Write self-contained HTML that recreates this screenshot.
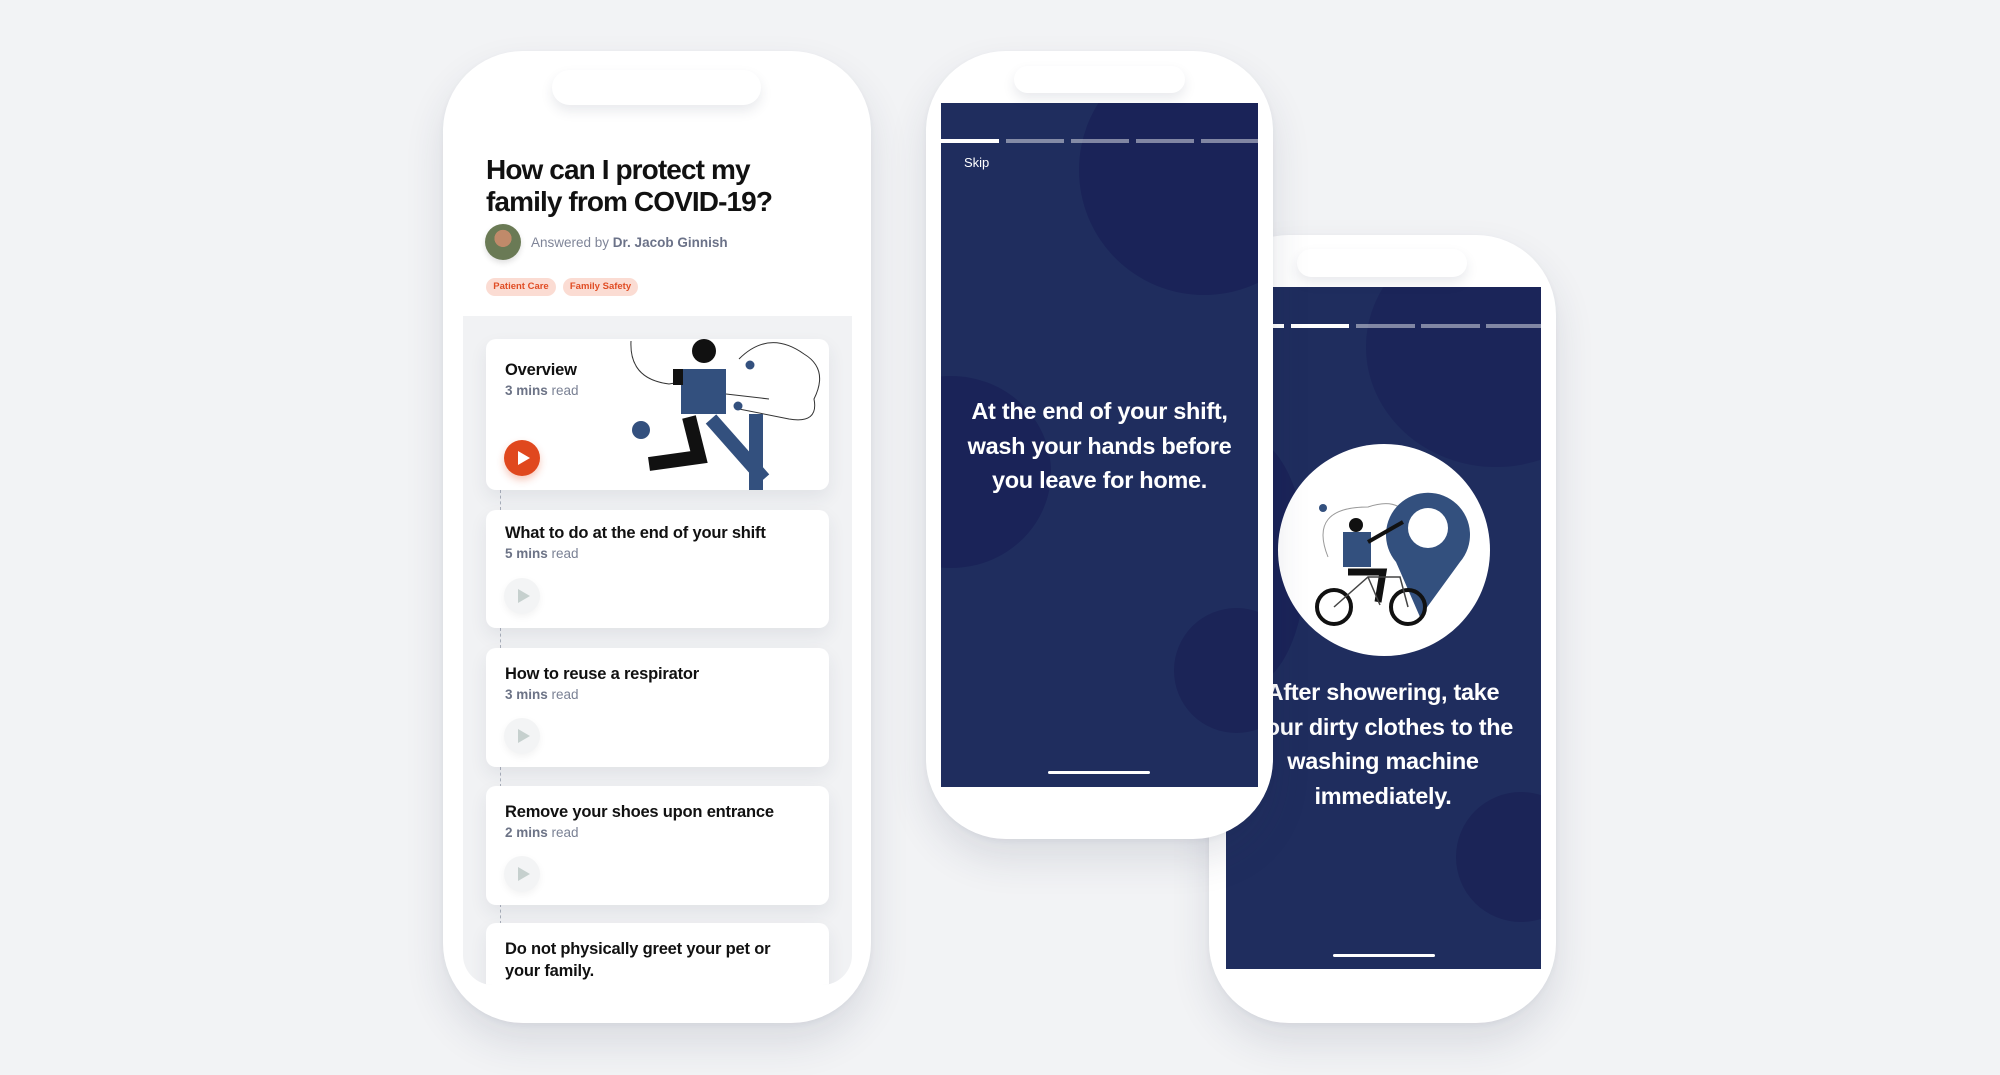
<!DOCTYPE html>
<html><head><meta charset="utf-8"><style>
*{margin:0;padding:0;box-sizing:border-box}
body{width:2000px;height:1075px;background:#f2f3f5;position:relative;overflow:hidden;font-family:"Liberation Sans",sans-serif}
.abs{position:absolute}
.phone{position:absolute;background:#fff;box-shadow:0 20px 40px rgba(40,50,80,.12),0 2px 6px rgba(40,50,80,.05)}
.notch{position:absolute;background:#fff;border-radius:0 0 26px 26px;box-shadow:0 6px 12px rgba(40,50,80,.10)}
.card{position:absolute;left:23px;width:343px;background:#fff;border-radius:10px;box-shadow:0 8px 18px rgba(40,50,80,.08)}
.ct{position:absolute;left:19px;font-weight:bold;font-size:16.5px;color:#111;letter-spacing:-.2px;line-height:22px}
.cm{position:absolute;left:19px;font-size:13.5px;color:#7a8194}
.cm b{color:#6c7386}
.pg{position:absolute;left:18px;width:36px;height:36px;border-radius:50%;background:#f3f4f5;box-shadow:0 3px 8px rgba(0,0,0,.05)}
.pg:after{content:"";position:absolute;left:14px;top:11px;border-left:12px solid #c6d0ce;border-top:7px solid transparent;border-bottom:7px solid transparent}
.dash{position:absolute;left:37px;width:0;border-left:1.5px dashed #a9afbb}
.st{color:#fff;font-weight:bold;font-size:23.5px;text-align:center;line-height:34.5px;letter-spacing:-.3px}
.bar{position:absolute;height:4px;background:rgba(255,255,255,.45)}
</style></head><body>

<!-- Phone 3 -->
<div class="phone" style="left:1209px;top:235px;width:347px;height:788px;border-radius:80px"></div>
<div class="abs" style="left:1226px;top:287px;width:315px;height:682px;background:#1f2d5e;overflow:hidden">
  <div class="abs" style="left:140px;top:-60px;width:260px;height:240px;border-radius:50%;background:#1b2559"></div>
  <div class="abs" style="left:230px;top:505px;width:130px;height:130px;border-radius:50%;background:#1b2457"></div>
  <div class="abs" style="left:-40px;top:150px;width:120px;height:250px;border-radius:50%;background:#1a2358"></div>
  <div class="bar" style="left:47px;top:37px;width:11px;background:#fff"></div>
  <div class="bar" style="left:65px;top:37px;width:58px;background:#fff"></div>
  <div class="bar" style="left:130px;top:37px;width:59px"></div>
  <div class="bar" style="left:195px;top:37px;width:59px"></div>
  <div class="bar" style="left:260px;top:37px;width:55px"></div>
  <div class="abs" style="left:52px;top:157px;width:212px;height:212px;border-radius:50%;background:#fff"></div>
  <svg class="abs" style="left:62px;top:190px" width="200" height="150" viewBox="0 0 200 150">
    <path d="M40 80 Q20 30 80 30 Q110 20 120 40" fill="none" stroke="#999" stroke-width="1"/>
    <circle cx="35" cy="31" r="4" fill="#33507e"/>
    <path d="M132 140 L108 85 A42 42 0 1 1 172 85 Z" fill="#33507e"/>
    <circle cx="140" cy="51" r="20" fill="#fff"/>
    <rect x="55" y="55" width="28" height="35" fill="#33507e"/>
    <circle cx="68" cy="48" r="7" fill="#111"/>
    <path d="M80 65 L115 45" stroke="#111" stroke-width="4"/>
    <path d="M60 95 L95 95 L90 125" stroke="#111" stroke-width="7" fill="none"/>
    <circle cx="46" cy="130" r="17" fill="none" stroke="#111" stroke-width="4"/>
    <circle cx="120" cy="130" r="17" fill="none" stroke="#111" stroke-width="4"/>
    <path d="M46 130 L80 100 L112 100 L120 130 M80 100 L92 128" stroke="#444" stroke-width="1.5" fill="none"/>
  </svg>
  <div class="abs" style="left:47px;top:388px;width:268px;height:190px;overflow:hidden">
    <div class="st" style="position:absolute;left:-50px;width:320px;top:0">After showering, take<br>your dirty clothes to the<br>washing machine<br>immediately.</div>
  </div>
  <div class="abs" style="left:107px;top:667px;width:102px;height:3px;background:#fff;border-radius:2px"></div>
</div>
<div class="notch" style="left:1297px;top:249px;width:170px;height:28px;border-radius:18px"></div>

<!-- Phone 2 -->
<div class="phone" style="left:926px;top:51px;width:347px;height:788px;border-radius:80px;z-index:2"></div>
<div class="abs" style="left:941px;top:103px;width:317px;height:684px;background:#1f2d5e;overflow:hidden;z-index:3">
  <div class="abs" style="left:138px;top:-58px;width:250px;height:250px;border-radius:50%;background:#1a2358"></div>
  <div class="abs" style="left:-90px;top:273px;width:200px;height:192px;border-radius:50%;background:#1a2358"></div>
  <div class="abs" style="left:233px;top:505px;width:125px;height:125px;border-radius:50%;background:#1b2457"></div>
  <div class="bar" style="left:0;top:36px;width:58px;background:#fff"></div>
  <div class="bar" style="left:65px;top:36px;width:58px"></div>
  <div class="bar" style="left:130px;top:36px;width:58px"></div>
  <div class="bar" style="left:195px;top:36px;width:58px"></div>
  <div class="bar" style="left:260px;top:36px;width:57px"></div>
  <div class="abs" style="left:23px;top:52px;color:#fff;font-size:13px">Skip</div>
  <div class="st abs" style="left:0;width:317px;top:291px">At the end of your shift,<br>wash your hands before<br>you leave for home.</div>
  <div class="abs" style="left:107px;top:668px;width:102px;height:3px;background:#fff;border-radius:2px"></div>
</div>
<div class="notch" style="left:1014px;top:66px;width:171px;height:27px;border-radius:18px;z-index:4"></div>

<!-- Phone 1 -->
<div class="phone" style="left:443px;top:51px;width:428px;height:972px;border-radius:80px"></div>
<div class="notch" style="left:552px;top:70px;width:209px;height:35px;border-radius:22px"></div>
<div class="abs" style="left:486px;top:154px;font-weight:bold;font-size:28px;line-height:32px;letter-spacing:-.9px;color:#111">How can I protect my<br>family from COVID-19?</div>
<div class="abs" style="left:485px;top:224px;width:36px;height:36px;border-radius:50%;background:radial-gradient(circle at 50% 40%,#c08a6a 0 30%,#6a7a55 31% 100%);box-shadow:0 3px 6px rgba(0,0,0,.12)"></div>
<div class="abs" style="left:531px;top:235px;font-size:13.5px;color:#7f8598">Answered by <b style="color:#6b7288">Dr. Jacob Ginnish</b></div>
<div class="abs" style="left:486px;top:278px;width:70px;height:18px;border-radius:9px;background:#fbdcd3;color:#e04d25;font-size:9.5px;font-weight:bold;text-align:center;line-height:18px">Patient Care</div>
<div class="abs" style="left:563px;top:278px;width:75px;height:18px;border-radius:9px;background:#fbdcd3;color:#e04d25;font-size:9.5px;font-weight:bold;text-align:center;line-height:18px">Family Safety</div>

<div class="abs" style="left:463px;top:316px;width:389px;height:669px;background:#f1f2f4;overflow:hidden;border-radius:0 0 30px 30px">
  <div class="dash" style="top:174px;height:20px"></div>
  <div class="dash" style="top:312px;height:20px"></div>
  <div class="dash" style="top:451px;height:20px"></div>
  <div class="dash" style="top:588px;height:20px"></div>
  <div class="card" style="top:23px;height:151px;overflow:hidden">
    <div class="ct" style="top:20px">Overview</div>
    <div class="cm" style="top:44px"><b>3 mins</b> read</div>
    <div class="abs" style="left:18px;top:101px;width:36px;height:36px;border-radius:50%;background:#e0481e;box-shadow:0 4px 8px rgba(224,72,30,.3)"></div>
    <div class="abs" style="left:32px;top:112px;border-left:12px solid #fff;border-top:7px solid transparent;border-bottom:7px solid transparent"></div>
    <svg class="abs" style="left:143px;top:0" width="200" height="151" viewBox="0 0 200 151">
      <path d="M2 2 Q0 40 40 45 L70 40" fill="none" stroke="#333" stroke-width="1"/>
      <path d="M110 20 Q140 -10 175 15 Q200 30 185 60 Q190 85 160 80 L110 70" fill="none" stroke="#333" stroke-width="1"/>
      <circle cx="75" cy="12" r="12" fill="#111"/>
      <rect x="52" y="30" width="45" height="45" fill="#33507e"/>
      <rect x="44" y="30" width="10" height="16" fill="#111"/>
      <path d="M60 78 L70 118 L20 125" stroke="#111" stroke-width="14" fill="none"/>
      <path d="M82 80 L135 140" stroke="#33507e" stroke-width="14"/>
      <rect x="120" y="75" width="14" height="76" fill="#33507e"/>
      <circle cx="12" cy="91" r="9" fill="#33507e"/>
      <circle cx="121" cy="26" r="4.5" fill="#33507e"/>
      <circle cx="109" cy="67" r="4.5" fill="#33507e"/>
      <path d="M97 55 L140 60" stroke="#333" stroke-width="1"/>
    </svg>
  </div>
  <div class="card" style="top:194px;height:118px">
    <div class="ct" style="top:12px">What to do at the end of your shift</div>
    <div class="cm" style="top:36px"><b>5 mins</b> read</div>
    <div class="pg" style="top:68px"></div>
  </div>
  <div class="card" style="top:332px;height:119px">
    <div class="ct" style="top:15px">How to reuse a respirator</div>
    <div class="cm" style="top:39px"><b>3 mins</b> read</div>
    <div class="pg" style="top:70px"></div>
  </div>
  <div class="card" style="top:470px;height:119px">
    <div class="ct" style="top:15px">Remove your shoes upon entrance</div>
    <div class="cm" style="top:39px"><b>2 mins</b> read</div>
    <div class="pg" style="top:70px"></div>
  </div>
  <div class="card" style="top:607px;height:119px">
    <div class="ct" style="top:15px">Do not physically greet your pet or<br>your family.</div>
    <div class="cm" style="top:62px"><b>4 mins</b> read</div>
  </div>
</div>
</body></html>
